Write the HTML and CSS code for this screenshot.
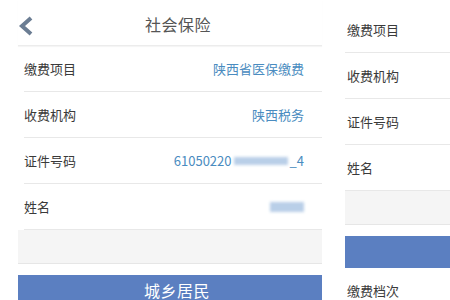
FILE: index.html
```html
<!DOCTYPE html>
<html lang="zh-CN">
<head>
    <meta charset="UTF-8">
    <meta name="viewport" content="width=device-width, initial-scale=1.0">
    <title>社会保险</title>
    <link rel="stylesheet" href="styles.css">
</head>
<body>
    <div class="screens">
        <div class="screen main">
            <div class="topbar">
                <svg class="back" width="16" height="20" viewBox="0 0 16 20">
                    <polyline points="13,2 4,10 13,18" fill="none" stroke="#6b7d93" stroke-width="4" stroke-linejoin="miter"/>
                </svg>
                <div class="title">社会保险</div>
            </div>
            <div class="rows">
                <div class="row"><span class="label">缴费项目</span><span class="value">陕西省医保缴费</span></div>
                <div class="row"><span class="label">收费机构</span><span class="value">陕西税务</span></div>
                <div class="row"><span class="label">证件号码</span><span class="value">61050220<span class="blur wide"></span>_4</span></div>
                <div class="row"><span class="label">姓名</span><span class="value"><span class="blur short"></span></span></div>
            </div>
            <div class="blank"></div>
            <div class="btn">城乡居民</div>
        </div>
        <div class="screen side">
            <div class="rows">
                <div class="row"><span class="label">缴费项目</span></div>
                <div class="row"><span class="label">收费机构</span></div>
                <div class="row"><span class="label">证件号码</span></div>
                <div class="row"><span class="label">姓名</span></div>
            </div>
            <div class="blank"></div>
            <div class="btn"></div>
            <div class="row last"><span class="label">缴费档次</span></div>
        </div>
    </div>
</body>
</html>
```

FILE: styles.css
```css
body {
    font-family: "Noto Sans CJK SC", "Liberation Sans", sans-serif;
    margin: 0;
    padding: 0;
    background: #fff;
    overflow: hidden;
}
.screens {
    display: flex;
    gap: 23px;
    padding-left: 18px;
    height: 300px;
    overflow: hidden;
}
.screen {
    display: flex;
    flex-direction: column;
}
.screen > * {
    flex-shrink: 0;
}
.main {
    width: 304px;
    flex-shrink: 0;
}
.side {
    flex: 1;
    padding-top: 7px;
    overflow: hidden;
}
.topbar {
    height: 45px;
    display: flex;
    align-items: center;
    border-bottom: 1px solid #ececec;
    box-shadow: 0 1px 1px rgba(0, 0, 0, 0.04);
}
.back {
    margin-top: 6px;
}
.title {
    flex: 1;
    text-align: center;
    font-size: 16px;
    letter-spacing: 0.5px;
    color: #555;
    margin-top: 2px;
}
.main .rows {
    margin-left: 6px;
}
.row {
    height: 45px;
    border-bottom: 1px solid #e8e8e8;
    display: flex;
    align-items: center;
    justify-content: space-between;
    font-size: 13px;
}
.main .row {
    padding-right: 18px;
}
.side .row {
    padding-left: 2px;
}
.side .row.last {
    border-bottom: none;
}
.label {
    color: #3a3a3a;
}
.value {
    color: #4a8cc0;
    display: flex;
    align-items: center;
}
.blur {
    display: inline-block;
    height: 8px;
    background: #b9cfe8;
    filter: blur(1.5px);
}
.blur.wide {
    width: 54px;
    margin: 0 2px;
}
.blur.short {
    width: 34px;
    height: 10px;
}
.blank {
    height: 33px;
    background: #f5f5f5;
    border-bottom: 1px solid #e6e6e6;
}
.btn {
    margin-top: 11px;
    height: 25px;
    background: #5b7fc1;
    color: #fff;
    font-size: 16px;
    line-height: 20px;
    text-align: center;
    padding-top: 5px;
    padding-left: 14px;
    letter-spacing: 0.5px;
    box-sizing: border-box;
}
.side .btn {
    height: 32px;
    margin-left: -2px;
}
.side .blank {
    margin-left: -2px;
}
```
